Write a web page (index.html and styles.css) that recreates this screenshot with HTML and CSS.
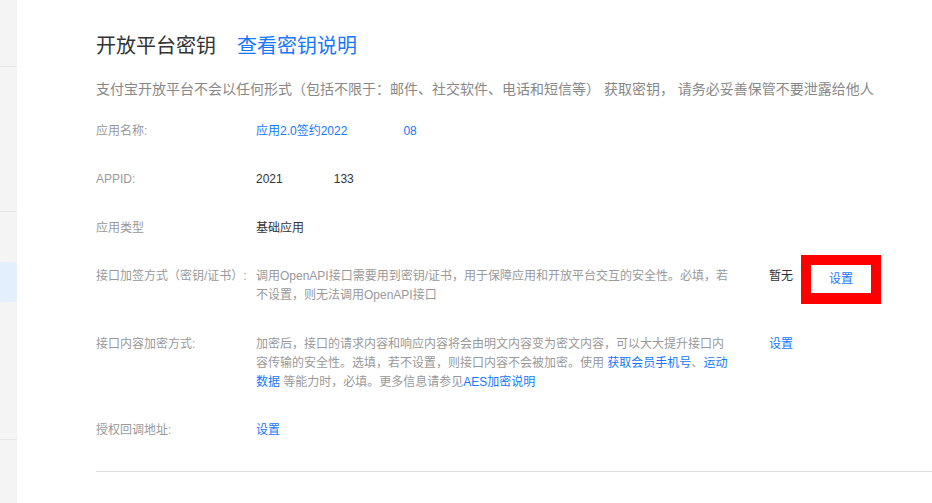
FILE: index.html
```html
<!DOCTYPE html>
<html lang="zh-CN">
<head>
  <meta charset="UTF-8" />
  <meta name="viewport" content="width=device-width, initial-scale=1.0"/>
  <title>开放平台密钥</title>
  <link rel="stylesheet" href="styles.css">
</head>
<body>
  <div class="page">
    <aside class="sidebar">
      <div class="side-group g1"></div>
      <div class="side-group g2"></div>
      <div class="side-group g3">
        <div class="side-item active"></div>
      </div>
      <div class="side-group g4"></div>
    </aside>

    <main class="content">
      <div class="title-bar">
        <h2>开放平台密钥</h2>
        <a href="#" class="link">查看密钥说明</a>
      </div>
      <p class="notice">支付宝开放平台不会以任何形式（包括不限于：邮件、社交软件、电话和短信等） 获取密钥， 请务必妥善保管不要泄露给他人</p>

      <div class="info-list">
        <div class="info-row">
          <div class="label">应用名称:</div>
          <div class="value"><a href="#" class="link">应用2.0签约2022<span class="redact r1"></span>08</a></div>
        </div>
        <div class="info-row">
          <div class="label">APPID:</div>
          <div class="value dark">2021<span class="redact r2"></span>133</div>
        </div>
        <div class="info-row">
          <div class="label">应用类型</div>
          <div class="value dark">基础应用</div>
        </div>
        <div class="info-row">
          <div class="label">接口加签方式（密钥/证书）:</div>
          <div class="value desc">调用OpenAPI接口需要用到密钥/证书，用于保障应用和开放平台交互的安全性。必填，若不设置，则无法调用OpenAPI接口</div>
          <div class="actions">
            <span class="dark">暂无</span>
            <span class="mark"><a href="#" class="link">设置</a></span>
          </div>
        </div>
        <div class="info-row">
          <div class="label">接口内容加密方式:</div>
          <div class="value desc">加密后，接口的请求内容和响应内容将会由明文内容变为密文内容，可以大大提升接口内容传输的安全性。选填，若不设置，则接口内容不会被加密。使用 <a href="#" class="link">获取会员手机号</a>、<a href="#" class="link">运动数据</a> 等能力时，必填。更多信息请参见<a href="#" class="link">AES加密说明</a></div>
          <div class="actions">
            <a href="#" class="link">设置</a>
          </div>
        </div>
        <div class="info-row">
          <div class="label">授权回调地址:</div>
          <div class="value"><a href="#" class="link">设置</a></div>
        </div>
      </div>

      <div class="divider"></div>
    </main>
  </div>
</body>
</html>
```

FILE: styles.css
```css
body {
  margin: 0;
  font-family: "Liberation Sans", "Noto Sans CJK SC", sans-serif;
  background: #fff;
  color: #333;
}
a {
  text-decoration: none;
}
.link {
  color: #1677ff;
}
.dark {
  color: #333;
}

.page {
  display: flex;
  min-height: 100vh;
}

/* left menu strip */
.sidebar {
  width: 17px;
  flex-shrink: 0;
  background: #f4f4f4;
  display: flex;
  flex-direction: column;
}
.side-group {
  border-bottom: 1px solid #e6e6e6;
}
.side-group.g1 { height: 66px; }
.side-group.g2 { height: 144px; }
.side-group.g3 { height: 228px; padding-top: 50px; box-sizing: border-box; }
.side-group.g4 { flex: 1; border-bottom: none; }
.side-item.active {
  height: 40px;
  background: #e3effd;
  border-radius: 0 4px 4px 0;
}

/* main */
.content {
  flex: 1;
  padding: 30px 0 0 79px;
}
.title-bar {
  display: flex;
  align-items: center;
  height: 28px;
  font-size: 20px;
}
.title-bar h2 {
  margin: 0;
  font-size: 20px;
  font-weight: normal;
  color: #333;
}
.title-bar .link {
  margin-left: 21px;
}
.notice {
  margin: 21px 0 0;
  font-size: 14px;
  line-height: 20px;
  color: #888;
  white-space: nowrap;
}

.info-list {
  margin-top: 22.5px;
  display: flex;
  flex-direction: column;
  gap: 29.5px;
  font-size: 12px;
  line-height: 19px;
}
.info-row {
  display: flex;
  align-items: flex-start;
}
.label {
  width: 160px;
  flex-shrink: 0;
  color: #999;
}
.value {
  color: #999;
}
.value.desc {
  width: 479px;
  flex-shrink: 0;
  margin-right: 34px;
}
.value.dark {
  color: #333;
}
.redact {
  display: inline-block;
  width: 56px;
}
.redact.r2 {
  width: 51px;
}
.actions {
  display: flex;
  align-items: flex-start;
  height: 19px;
}
.mark {
  margin: -12px 0 0 8px;
  width: 60px;
  height: 28px;
  line-height: 28px;
  text-align: center;
  border: 10px solid #ff0000;
  border-bottom-width: 11px;
  background: #fff;
}

.divider {
  margin-top: 31px;
  border-top: 1px solid #ddd;
}
```
